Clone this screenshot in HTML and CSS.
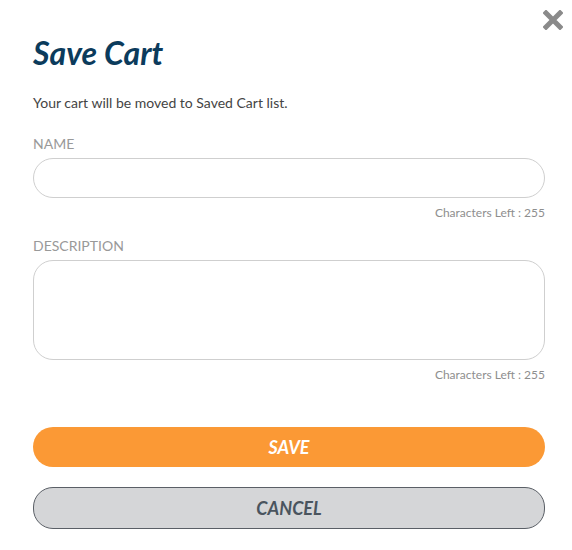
FILE: index.html
```html
<!DOCTYPE html>
<html lang="en">

<head>
   <meta charset="UTF-8">
   <meta name="viewport" content="width=device-width, initial-scale=1.0">
   <title>Save Cart</title>
   <link rel="stylesheet" href="styles.css">
</head>

<body>
   <div class="modal">
      <button class="close" aria-label="Close">
         <svg width="20" height="20" viewBox="0 0 20 20">
            <path d="M3 3 L17 17 M17 3 L3 17" stroke="#8a8a8a" stroke-width="5" stroke-linecap="square" />
         </svg>
      </button>

      <h1 class="title">Save Cart</h1>
      <p class="intro">Your cart will be moved to Saved Cart list.</p>

      <div class="field">
         <label for="cartName">NAME</label>
         <input type="text" id="cartName" class="input">
         <div class="counter">Characters Left : 255</div>
      </div>

      <div class="field">
         <label for="cartDesc">DESCRIPTION</label>
         <textarea id="cartDesc" class="input textarea"></textarea>
         <div class="counter">Characters Left : 255</div>
      </div>

      <div class="actions">
         <button class="btn btn-save">SAVE</button>
         <button class="btn btn-cancel">CANCEL</button>
      </div>
   </div>
</body>

</html>
```

FILE: styles.css
```css
body {
   margin: 0;
   background-color: #fff;
   font-family: Lato, "Open Sans", sans-serif;
   color: #444;
}

.modal {
   position: relative;
   width: 572px;
   box-sizing: border-box;
   padding: 30px 27px 0 33px;
}

.close {
   position: absolute;
   top: 10px;
   right: 9px;
   padding: 0;
   border: 0;
   background: none;
   width: 20px;
   height: 20px;
   cursor: pointer;
}

.close svg {
   display: block;
}

.title {
   margin: 0;
   font-size: 32px;
   font-weight: bold;
   font-style: italic;
   color: #0b3b5c;
   line-height: 46px;
}

.intro {
   margin: 18px 0 0;
   font-size: 14px;
   line-height: 18px;
}

.field {
   margin-top: 23px;
}

.field + .field {
   margin-top: 17px;
}

.field label {
   display: block;
   font-size: 14px;
   line-height: 18px;
   color: #999;
   margin-bottom: 5px;
}

.input {
   display: block;
   width: 100%;
   box-sizing: border-box;
   height: 40px;
   border: 1px solid #cfcfcf;
   border-radius: 20px;
   padding: 0 16px;
   font-family: inherit;
   font-size: 14px;
   outline: none;
}

.textarea {
   height: 100px;
   resize: none;
   padding: 12px 16px;
}

.counter {
   text-align: right;
   font-size: 12px;
   line-height: 14px;
   color: #8e8e8e;
   margin-top: 8px;
}

.actions {
   margin-top: 45px;
   display: flex;
   flex-direction: column;
   gap: 20px;
}

.btn {
   height: 40px;
   border-radius: 20px;
   font-family: inherit;
   font-size: 18px;
   font-weight: bold;
   font-style: italic;
   cursor: pointer;
}

.btn-save {
   background-color: #fb9935;
   border: 0;
   color: #fff;
}

.btn-cancel {
   height: 42px;
   background-color: #d5d6d8;
   border: 1px solid #5a5f66;
   color: #4a545e;
}
```
